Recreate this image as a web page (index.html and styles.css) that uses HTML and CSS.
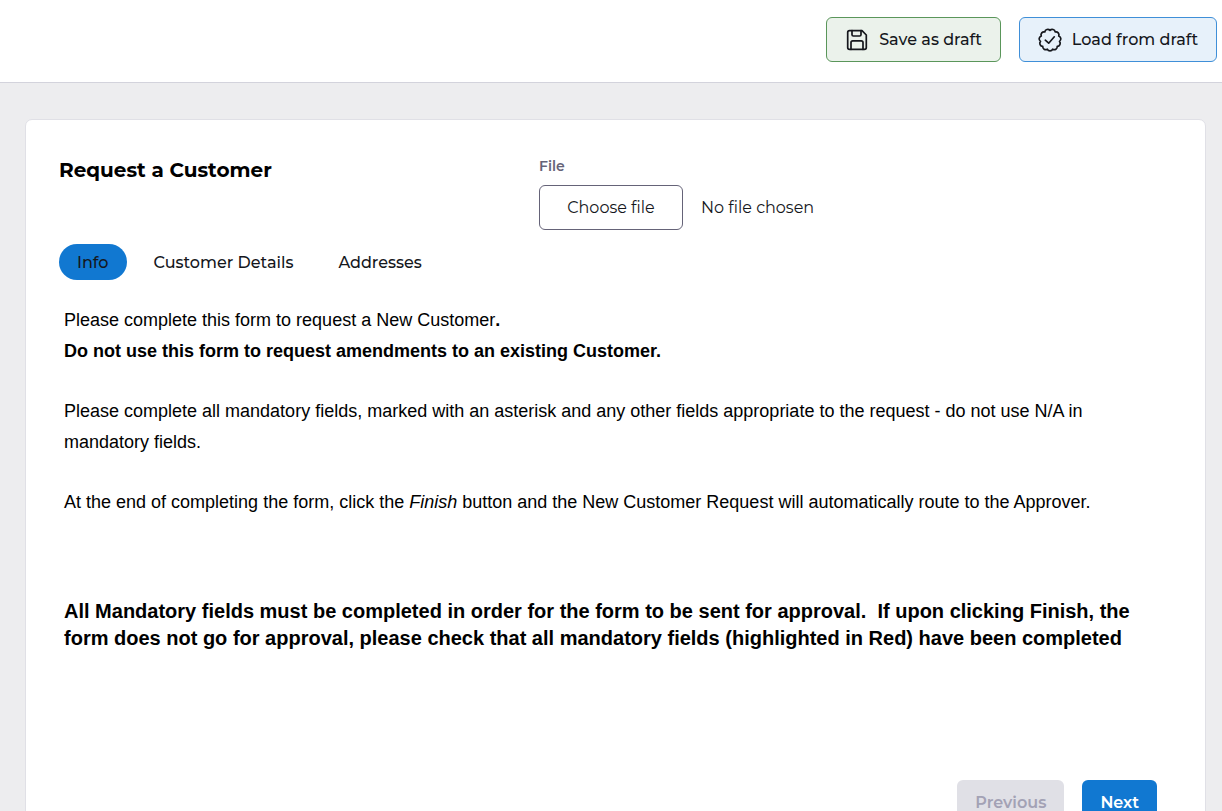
FILE: index.html
```html
<!DOCTYPE html>
<html lang="en">
<head>
    <meta charset="UTF-8">
    <meta name="viewport" content="width=device-width, initial-scale=1.0">
    <title>Request a Customer</title>
    <link rel="stylesheet" href="styles.css">
</head>
<body>
    <header class="toolbar">
        <button type="button" class="btn btn-save">
            <svg class="icon" viewBox="0 0 24 24" aria-hidden="true">
                <path d="M4.500 2.700H17L21.300 7V19.500Q21.300 21.300 19.500 21.300H4.500Q2.700 21.300 2.700 19.500V4.500Q2.700 2.700 4.500 2.700Z"/>
                <path d="M7 2.700V6.700Q7 8 8.300 8H14.700Q16 8 16 6.700V2.700"/>
                <path d="M6 21.300V14.500Q6 12.800 7.700 12.800H16.300Q18 12.800 18 14.500V21.300"/>
            </svg>
            Save as draft
        </button>
        <button type="button" class="btn btn-load">
            <svg class="icon" viewBox="0 0 24 24" aria-hidden="true">
                <path d="M12 2.400A3 3 0 0 1 17.190 3.920A3 3 0 0 1 20.730 8.010A3 3 0 0 1 21.500 13.370A3 3 0 0 1 19.250 18.290A3 3 0 0 1 14.700 21.210A3 3 0 0 1 9.300 21.210A3 3 0 0 1 4.750 18.290A3 3 0 0 1 2.500 13.370A3 3 0 0 1 3.270 8.010A3 3 0 0 1 6.810 3.920A3 3 0 0 1 12 2.400Z"/>
                <path d="M7.300 12.200L10.700 15.200L16.300 8.800"/>
            </svg>
            Load from draft
        </button>
    </header>

    <main class="page">
        <form class="card">
            <div class="card-head">
                <h1>Request a Customer</h1>
                <div class="file-field">
                    <label class="file-label" for="file">File</label>
                    <div class="file-row">
                        <label class="btn btn-file">
                            <input type="file" id="file">
                            Choose file
                        </label>
                        <span>No file chosen</span>
                    </div>
                </div>
            </div>

            <nav class="tabs">
                <a href="#info" class="tab active">Info</a>
                <a href="#details" class="tab">Customer Details</a>
                <a href="#addresses" class="tab">Addresses</a>
            </nav>

            <section class="info" id="info">
                <p>Please complete this form to request a New Customer<b>.</b><br>
                <b>Do not use this form to request amendments to an existing Customer.</b></p>
                <p>Please complete all mandatory fields, marked with an asterisk and any other fields appropriate to the request - do not use N/A in mandatory fields.</p>
                <p>At the end of completing the form, click the <i>Finish</i> button and the New Customer Request will automatically route to the Approver.</p>
                <p class="notice">All Mandatory fields must be completed in order for the form to be sent for approval.&nbsp; If upon clicking Finish, the form does not go for approval, please check that all mandatory fields (highlighted in Red) have been completed</p>
            </section>

            <div class="card-nav">
                <button type="button" class="btn btn-prev" disabled>Previous</button>
                <button type="button" class="btn btn-next">Next</button>
            </div>
        </form>
    </main>
</body>
</html>
```
FILE: styles.css
```css
* {box-sizing: border-box;}
body {
    margin: 0;
    background: #ededef;
    color: #15171c;
    font-family: Montserrat, Inter, sans-serif;
    font-size: 16px;
    font-weight: 500;
}
.toolbar {
    display: flex;
    justify-content: flex-end;
    gap: 18px;
    padding: 17px 5px 20px;
    background: white;
    border-bottom: 1px solid #d3d3dc;
}
.btn {
    display: inline-flex;
    align-items: center;
    justify-content: center;
    height: 45px;
    padding: 0 17px;
    border: 1px solid transparent;
    border-radius: 6px;
    color: #15171c;
    font: inherit;
    cursor: pointer;
}
.icon {
    width: 24px;
    height: 24px;
    margin-right: 10px;
    fill: none;
    stroke: currentColor;
    stroke-width: 1.7;
    stroke-linecap: round;
    stroke-linejoin: round;
}
.btn-save {min-width: 175px; background: #ebf2eb; border-color: #5a965a;}
.btn-load {min-width: 198px; background: #e7f1fa; border-color: #3f8fd8;}
.page {padding: 36px 16px 36px 25px;}
.card {
    padding: 36px 33px;
    background: white;
    border: 1px solid #e0e0e6;
    border-radius: 7px;
}
.card-head {
    display: grid;
    grid-template-columns: minmax(0, 480px) 1fr;
}
h1 {
    margin: 0;
    padding-top: 1px;
    color: black;
    font-size: 20px;
    line-height: 26px;
    font-weight: 700;
}
.file-label {
    display: block;
    margin-bottom: 9px;
    color: #656378;
    font-size: 14px;
    line-height: 20px;
    font-weight: 600;
}
.file-row {
    display: flex;
    align-items: center;
    gap: 18px;
    font-weight: 400;
}
.btn-file {
    position: relative;
    min-width: 144px;
    border-color: #656378;
}
.btn-file input {
    position: absolute;
    inset: 0;
    width: 100%;
    opacity: 0;
    cursor: pointer;
}
.tabs {
    display: flex;
    gap: 9px;
    margin-top: 14px;
}
.tab {
    padding: 1px 18px 0;
    border-radius: 18px;
    color: #15171c;
    line-height: 35px;
    text-decoration: none;
}
.tab.active {background: #1178d1;}
.info {
    padding: 25px 5px 0;
    color: black;
    font-family: Arial, "Liberation Sans", sans-serif;
    font-size: 18px;
    line-height: 31px;
    font-weight: 400;
}
.info p {margin: 0 0 29px;}
.info .notice {
    margin: 80px 0 128px;
    font-size: 20px;
    line-height: 27px;
    font-weight: 700;
}
.card-nav {
    display: flex;
    justify-content: flex-end;
    gap: 18px;
    padding-right: 15px;
}
.card-nav .btn {font-weight: 600;}
.card-nav .btn-prev {min-width: 106px; background: #e0e0e6; color: #a3a2b5; cursor: default;}
.card-nav .btn-next {min-width: 74px; background: #1178d1; color: white;}
```
